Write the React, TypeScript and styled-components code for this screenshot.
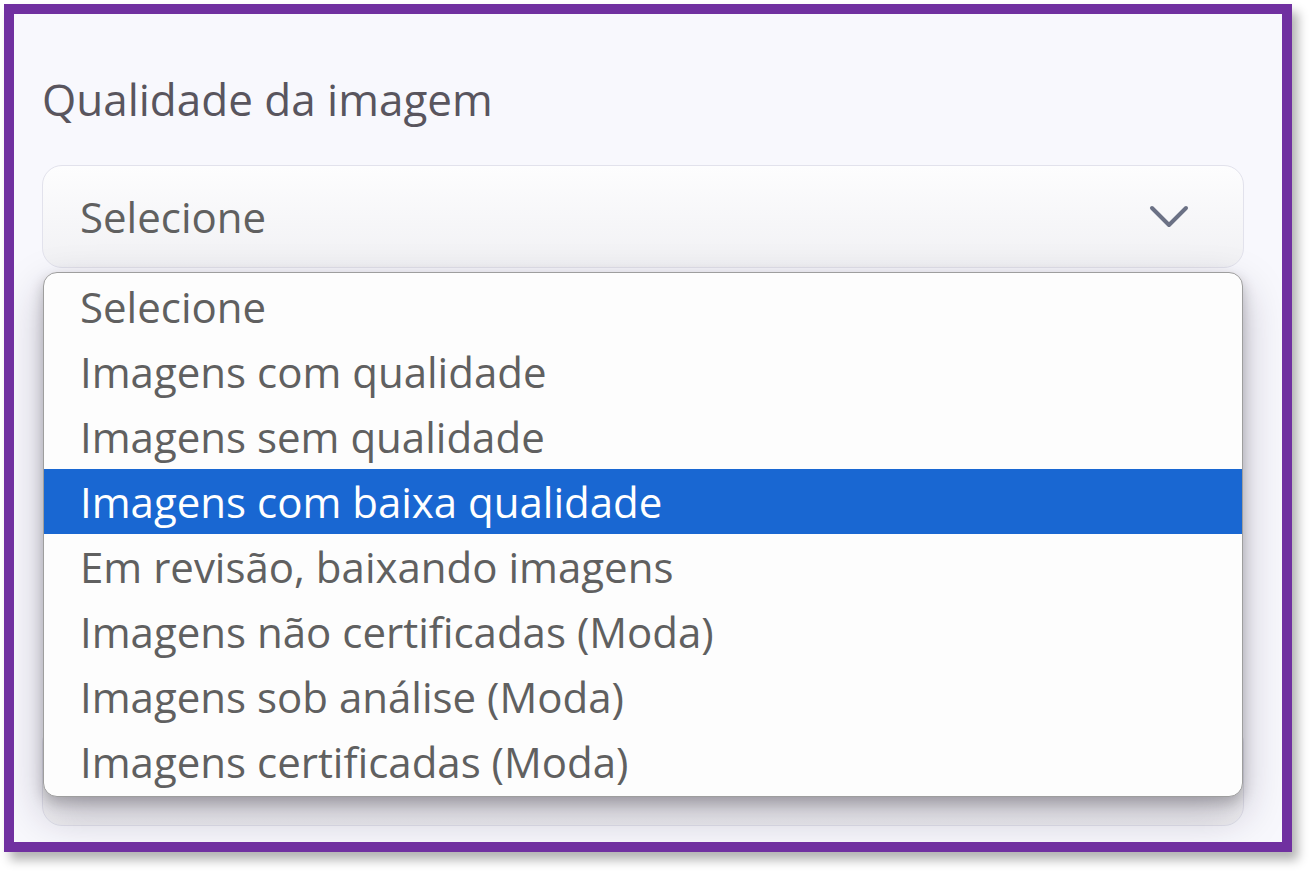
import React from 'react';
import styled, { createGlobalStyle } from 'styled-components';

const GlobalStyle = createGlobalStyle`
  html, body {
    margin: 0;
    padding: 0;
    background: #ffffff;
  }
  body {
    font-family: "Open Sans", "Noto Sans", sans-serif;
  }
`;

const Page = styled.div`
  width: 1316px;
  height: 877px;
  padding: 4px 0 0 4px;
  box-sizing: border-box;
`;

const Frame = styled.div`
  width: 1288px;
  height: 848px;
  box-sizing: border-box;
  border: 10px solid #7030a0;
  background: #f8f8fd;
  box-shadow: 6px 8px 10px rgba(0, 0, 0, 0.3);
  display: flex;
  flex-direction: column;
  padding: 58px 38px 16px 28px;
  overflow: hidden;
`;

const Field = styled.div<{ $bottom?: boolean }>`
  display: flex;
  flex-direction: column;
  gap: 39px;
  margin-top: ${p => (p.$bottom ? 'auto' : '0')};
`;

const Label = styled.label`
  font-size: 44px;
  line-height: 54px;
  color: #59555e;
`;

const SelectWrap = styled.div`
  position: relative;
`;

const SelectBox = styled.div`
  height: 103px;
  box-sizing: border-box;
  border: 1.5px solid #e2e2ec;
  border-radius: 20px;
  background: linear-gradient(180deg, #fdfdfe 0%, #f1f1f4 100%);
  display: flex;
  align-items: center;
  justify-content: space-between;
  padding: 0 54px 0 37px;
  font-size: 42px;
  color: #606060;
`;

const Chevron = () => (
  <svg width="40" height="26" viewBox="0 0 40 26" fill="none">
    <polyline
      points="3,4 20,21 37,4"
      stroke="#6b7185"
      strokeWidth="4"
      strokeLinecap="round"
      strokeLinejoin="round"
    />
  </svg>
);

const Dropdown = styled.ul`
  position: absolute;
  top: calc(100% + 4px);
  left: 1px;
  right: 1px;
  margin: 0;
  padding: 1px 0 2px;
  list-style: none;
  background: #fdfdfd;
  border: 1.5px solid #9e9e9e;
  border-radius: 14px;
  overflow: hidden;
  box-shadow: 0 18px 44px rgba(30, 20, 50, 0.26), 0 6px 14px rgba(0, 0, 0, 0.22);
  z-index: 2;
`;

const Option = styled.li<{ $active?: boolean }>`
  height: 65px;
  display: flex;
  align-items: center;
  padding-left: 36px;
  font-size: 42px;
  color: ${p => (p.$active ? '#ffffff' : '#606060')};
  background: ${p => (p.$active ? '#1967d2' : 'transparent')};
  white-space: nowrap;
`;

const options = [
  'Selecione',
  'Imagens com qualidade',
  'Imagens sem qualidade',
  'Imagens com baixa qualidade',
  'Em revisão, baixando imagens',
  'Imagens não certificadas (Moda)',
  'Imagens sob análise (Moda)',
  'Imagens certificadas (Moda)',
];

export default function App() {
  return (
    <>
      <GlobalStyle />
      <Page>
        <Frame>
          <Field>
            <Label>Qualidade da imagem</Label>
            <SelectWrap>
              <SelectBox>
                <span>Selecione</span>
                <Chevron />
              </SelectBox>
              <Dropdown>
                {options.map((o, i) => (
                  <Option key={o} $active={i === 3}>
                    {o}
                  </Option>
                ))}
              </Dropdown>
            </SelectWrap>
          </Field>
          <Field $bottom>
            {/* next field, hidden behind the open list */}
            <SelectBox />
          </Field>
        </Frame>
      </Page>
    </>
  );
}
